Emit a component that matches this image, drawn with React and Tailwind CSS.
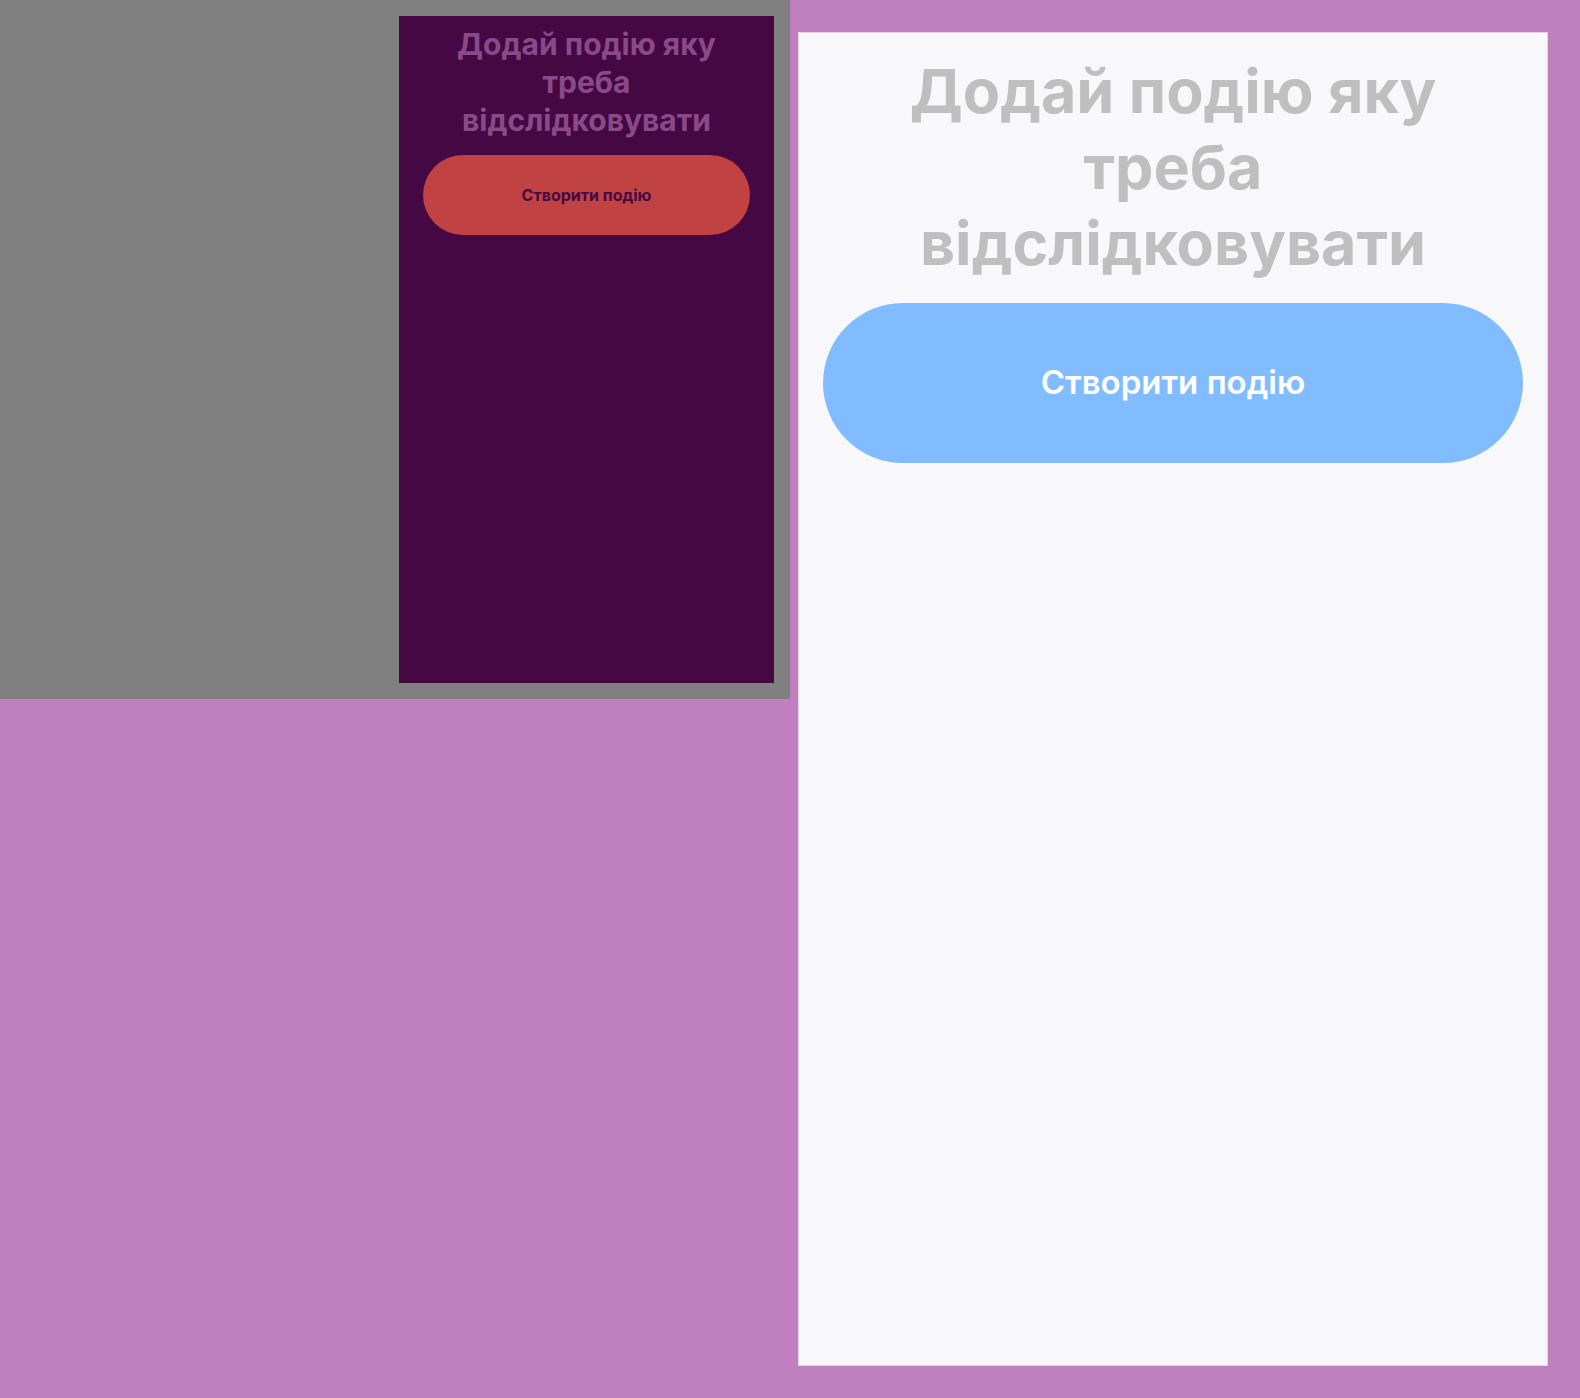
import React from 'react';

const font = { fontFamily: 'Inter, "Noto Sans", sans-serif' };

const SmallScreen = () => (
  <div className="w-[375px] h-[667px] bg-[#460842] flex flex-col items-center pt-[9px] px-6">
    <h1 className="text-[30px] leading-[38px] font-bold text-[#8a4a89] text-center">
      Додай подію яку треба відслідковувати
    </h1>
    <button
      type="button"
      className="mt-4 w-full h-[80px] rounded-full bg-[#c04242] text-[#460842] text-[16px] font-bold"
    >
      Створити подію
    </button>
  </div>
);

const LargeScreen = () => (
  <div className="w-[750px] h-[1334px] bg-[#f8f8fa] flex flex-col items-center pt-[20px] px-6 border border-[#e6d3e6]">
    <h1 className="text-[61px] leading-[76px] font-bold text-[#bfbfbf] text-center px-[70px]">
      Додай подію яку треба відслідковувати
    </h1>
    <button
      type="button"
      className="mt-[22px] w-full h-[160px] rounded-full bg-[#80bcff] text-white text-[33px] font-semibold"
    >
      Створити подію
    </button>
  </div>
);

export default function App() {
  return (
    <div className="w-full h-[1398px] bg-[#c07fbe] flex items-start" style={font}>
      <div className="w-[790px] h-[699px] bg-[#808080] flex justify-end p-4">
        <SmallScreen />
      </div>
      <div className="ml-2 mt-8">
        <LargeScreen />
      </div>
    </div>
  );
}
